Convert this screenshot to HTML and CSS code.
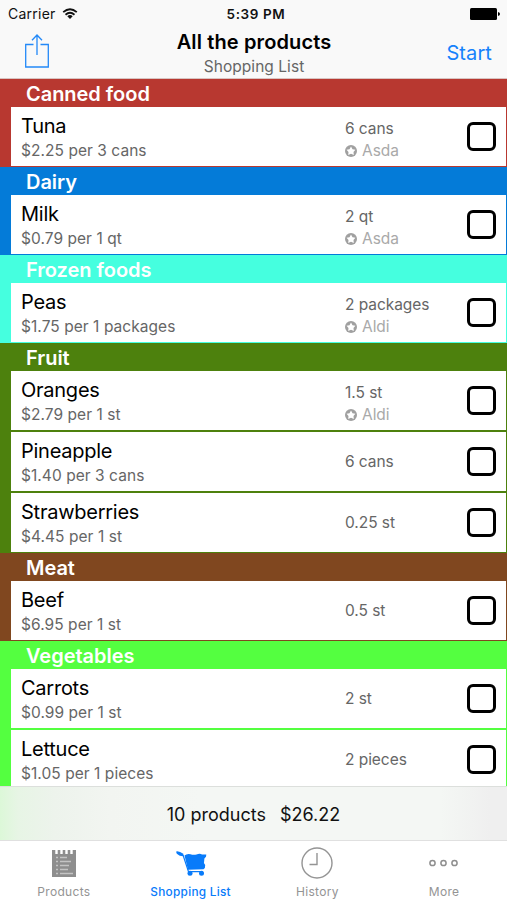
FILE: index.html
```html
<!DOCTYPE html>
<html lang="en">
<head>
<meta charset="utf-8">
<title>All the products</title>
<link rel="stylesheet" href="styles.css">
</head>
<body>
<svg class="defs" aria-hidden="true">
  <symbol id="star" viewBox="0 0 12 12">
    <circle cx="6" cy="6" r="6" fill="#a0a0a0"/>
    <path d="M6 1.600 7.500 4.200 10.400 4.700 8.500 6.900 8.800 9.900 6 8.700 3.200 9.900 3.500 6.900 1.600 4.700 4.500 4.200Z" fill="#fff"/>
  </symbol>
</svg>
<div class="app">
  <header class="top">
    <div class="status">
      <div class="carrier"><span>Carrier</span>
        <svg width="16" height="12" viewBox="0 0 16 12"><path d="M1.2 4.2Q8-1.8 14.8 4.2M3.5 6.7Q8 2.8 12.5 6.7" fill="none" stroke="#111" stroke-width="1.8"/><path d="M5.3 8.2Q8 6 10.7 8.2L8 11Z" fill="#111"/></svg>
      </div>
      <div class="time">5:39 PM</div>
      <svg class="battery" width="30" height="12" viewBox="0 0 30 12"><rect width="27" height="12" rx="1.5"/><path d="M28 4Q30 4.5 30 6T28 8Z"/></svg>
    </div>
    <nav class="nav">
      <svg class="share" width="24" height="34" viewBox="0 0 24 34" fill="none" stroke="#2389f8" stroke-width="1.3"><path d="M8.5 10.5H.7V33H23.3V10.5H15.5M12 21V1M7 6.3 12 1 17 6.3"/></svg>
      <div class="titles"><h1>All the products</h1><p>Shopping List</p></div>
      <a class="start">Start</a>
    </nav>
  </header>
  <main class="list">
    <section class="group red"><h2>Canned food</h2>
      <div class="row"><div class="item"><b>Tuna</b><small>$2.25 per 3 cans</small></div><div class="qty"><span>6 cans</span><span class="store"><svg><use href="#star"/></svg>Asda</span></div><i class="check"></i></div>
    </section>
    <section class="group blue"><h2>Dairy</h2>
      <div class="row"><div class="item"><b>Milk</b><small>$0.79 per 1 qt</small></div><div class="qty"><span>2 qt</span><span class="store"><svg><use href="#star"/></svg>Asda</span></div><i class="check"></i></div>
    </section>
    <section class="group aqua"><h2>Frozen foods</h2>
      <div class="row"><div class="item"><b>Peas</b><small>$1.75 per 1 packages</small></div><div class="qty"><span>2 packages</span><span class="store"><svg><use href="#star"/></svg>Aldi</span></div><i class="check"></i></div>
    </section>
    <section class="group green"><h2>Fruit</h2>
      <div class="row"><div class="item"><b>Oranges</b><small>$2.79 per 1 st</small></div><div class="qty"><span>1.5 st</span><span class="store"><svg><use href="#star"/></svg>Aldi</span></div><i class="check"></i></div>
      <div class="row"><div class="item"><b>Pineapple</b><small>$1.40 per 3 cans</small></div><div class="qty"><span>6 cans</span></div><i class="check"></i></div>
      <div class="row"><div class="item"><b>Strawberries</b><small>$4.45 per 1 st</small></div><div class="qty"><span>0.25 st</span></div><i class="check"></i></div>
    </section>
    <section class="group brown"><h2>Meat</h2>
      <div class="row"><div class="item"><b>Beef</b><small>$6.95 per 1 st</small></div><div class="qty"><span>0.5 st</span></div><i class="check"></i></div>
    </section>
    <section class="group lime"><h2>Vegetables</h2>
      <div class="row"><div class="item"><b>Carrots</b><small>$0.99 per 1 st</small></div><div class="qty"><span>2 st</span></div><i class="check"></i></div>
      <div class="row"><div class="item"><b>Lettuce</b><small>$1.05 per 1 pieces</small></div><div class="qty"><span>2 pieces</span></div><i class="check"></i></div>
    </section>
  </main>
  <div class="total"><span>10 products</span><span>$26.22</span></div>
  <nav class="tabs">
    <a class="tab"><svg width="24" height="32" viewBox="0 0 24 32"><path fill="#8e8e8e" d="M0 3H24V30H0Z"/><path d="M4.500 3v4M9.500 3v4M14.500 3v4M19.500 3v4" stroke="#fff" stroke-width="2.400"/><path d="M4 10.500h2M8 10.500h7M4 14.500h2M8 14.500h11M4 18.500h2M8 18.500h9M4 22.500h2M8 22.500h8M4 26.500h2M8 26.500h13" stroke="#c4c4c4" stroke-width="1.300"/></svg><span>Products</span></a>
    <a class="tab active"><svg width="32" height="32" viewBox="0 0 32 32" fill="#087bfa"><path d="M1.500 4.200Q4.500 3.800 8.300 6.700L8.300 9.300Q4.500 9.300 1.800 6.800 .8 5 1.500 4.200Z"/><path d="M9.500 8.500Q12 6.300 15.500 7.200 18.500 8.200 21.500 7.400 25 6 27 7.500L31.300 7.600 31 9.800Q28.700 11.500 29.200 13.800 28.200 15.800 30.200 18 30.500 21 28.500 22.200L13 22.800Z"/><path d="M8 8 13.500 24.600H27.500" fill="none" stroke="#087bfa" stroke-width="1.200"/><circle cx="15" cy="26.200" r="2.500"/><circle cx="26.500" cy="26.200" r="2.500"/></svg><span>Shopping List</span></a>
    <a class="tab"><svg width="32" height="32" viewBox="0 0 32 32" fill="none" stroke="#949494" stroke-width="1.400"><circle cx="16" cy="16" r="15"/><path d="M16 6V17.500H8.500"/></svg><span>History</span></a>
    <a class="tab"><svg width="30" height="32" viewBox="0 0 30 32" fill="none" stroke="#8e8e8e" stroke-width="1.500"><circle cx="3.500" cy="16" r="2.600"/><circle cx="14.500" cy="16" r="2.600"/><circle cx="25.500" cy="16" r="2.600"/></svg><span>More</span></a>
  </nav>
</div>
</body>
</html>
```
FILE: styles.css
```css
* { box-sizing: border-box; margin: 0; }
body { font-family: Inter, "Liberation Sans", sans-serif; background: #fff; color: #111; }
.defs { display: none; }
.app { height: 900px; display: flex; flex-direction: column; overflow: hidden; }
.top { height: 79px; flex: none; background: #f9f9f9; border-bottom: 1px solid #d8c4c2; }
.status { height: 28px; padding: 0 7px 0 8px; display: grid; grid-template-columns: 1fr auto 1fr; align-items: center; font-size: 14px; line-height: 20px; }
.carrier { display: flex; align-items: center; gap: 6px; letter-spacing: .25px; }
.time { font-weight: 600; font-size: 13.5px; letter-spacing: .6px; padding-left: 4px; }
.battery { justify-self: end; }
.nav { height: 50px; padding: 0 15px 0 16px; display: grid; grid-template-columns: 1fr auto 1fr; }
.share { margin: 6px 0 0 9px; }
.titles { text-align: center; }
h1 { font-size: 20px; line-height: 29px; font-weight: 600; color: #000; letter-spacing: .12px; }
.titles p { font-size: 15.5px; line-height: 19px; color: #666; letter-spacing: .05px; }
.start { justify-self: end; color: #1682fc; font-size: 20px; line-height: 50px; letter-spacing: .1px; }
.list { flex: 1; min-height: 0; overflow: hidden; }
.group { padding: 0 1px 1px 11px; display: flex; flex-direction: column; gap: 2px; }
h2 { height: 28px; margin-bottom: -2px; padding-left: 15px; color: #fff; font-size: 20px; line-height: 30px; font-weight: 600; letter-spacing: -.03px; }
.red { background: #b83830; }
.blue { background: #047bd8; }
.aqua { background: #45ffdf; }
.green { background: #4d810d; }
.brown { background: #80471f; }
.lime { background: #54ff40; }
.row { height: 59px; flex: none; background: #fff; padding: 0 10px; display: grid; grid-template-columns: 324px 1fr 29px; align-items: center; }
.item { padding-top: 3px; }
.item b { display: block; font-size: 20px; line-height: 25px; font-weight: 400; color: #000; letter-spacing: -.25px; }
.item small { display: block; font-size: 15.5px; line-height: 23px; color: #666; letter-spacing: .05px; }
.qty { font-size: 15.5px; line-height: 22px; color: #666; padding-top: 1px; letter-spacing: -.05px; }
.qty span { display: block; }
.qty:has(.store) { padding-top: 6px; }
.qty .store { display: flex; align-items: center; gap: 5px; color: #a9a9a9; }
.store svg { width: 12px; height: 12px; }
.check { width: 29px; height: 29px; border: 3px solid #000; border-radius: 6px; }
.total { height: 55px; flex: none; padding-top: 1px; border-top: 1px solid #dcdfdc; border-bottom: 1px solid #e0e0e0; background: linear-gradient(90deg, #dcf8d8 0, #e7f5e5 18px, #edf3ec 55px, #f2f5f1 110px, #f4f7f4 200px, #f4f7f4 440px, #efefef 490px); display: flex; justify-content: center; align-items: center; gap: 14px; font-size: 18px; }
.tabs { height: 59px; flex: none; display: grid; grid-template-columns: repeat(4, 1fr); background: #fff; }
.tab { display: flex; flex-direction: column; align-items: center; padding: 6px 0 0 1px; color: #949494; font-size: 12px; line-height: 16px; letter-spacing: .3px; gap: 5px; }
.active { color: #087bfa; letter-spacing: .28px; font-weight: 500; font-size: 11.8px; }
```
